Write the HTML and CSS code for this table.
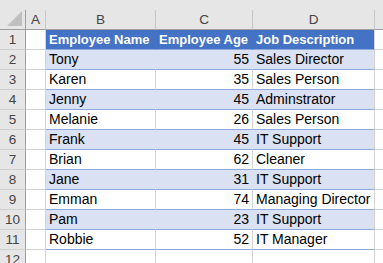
FILE: index.html
```html
<!DOCTYPE html>
<html>
<head>
<meta charset="utf-8">
<link rel="stylesheet" href="styles.css">
</head>
<body>
<div class="sheet">
  <div class="topstrip"></div>
  <table class="grid">
    <colgroup>
      <col class="c-rh"><col class="c-a"><col class="c-b"><col class="c-c"><col class="c-d"><col class="c-e">
    </colgroup>
    <thead>
      <tr class="colhead">
        <th class="corner"><span class="tri"></span></th>
        <th>A</th><th>B</th><th>C</th><th>D</th><th class="last"></th>
      </tr>
    </thead>
    <tbody>
      <tr class="hdr"><th>1</th><td></td><td class="t">Employee Name</td><td class="t">Employee Age</td><td class="t end">Job Description</td><td></td></tr>
      <tr class="band"><th>2</th><td></td><td class="t">Tony</td><td class="t num">55</td><td class="t end">Sales Director</td><td></td></tr>
      <tr class="plain"><th>3</th><td></td><td class="t">Karen</td><td class="t num">35</td><td class="t end">Sales Person</td><td></td></tr>
      <tr class="band"><th>4</th><td></td><td class="t">Jenny</td><td class="t num">45</td><td class="t end">Adminstrator</td><td></td></tr>
      <tr class="plain"><th>5</th><td></td><td class="t">Melanie</td><td class="t num">26</td><td class="t end">Sales Person</td><td></td></tr>
      <tr class="band"><th>6</th><td></td><td class="t">Frank</td><td class="t num">45</td><td class="t end">IT Support</td><td></td></tr>
      <tr class="plain"><th>7</th><td></td><td class="t">Brian</td><td class="t num">62</td><td class="t end">Cleaner</td><td></td></tr>
      <tr class="band"><th>8</th><td></td><td class="t">Jane</td><td class="t num">31</td><td class="t end">IT Support</td><td></td></tr>
      <tr class="plain"><th>9</th><td></td><td class="t">Emman</td><td class="t num">74</td><td class="t end">Managing Director</td><td></td></tr>
      <tr class="band"><th>10</th><td></td><td class="t">Pam</td><td class="t num">23</td><td class="t end">IT Support</td><td></td></tr>
      <tr class="plain"><th>11</th><td></td><td class="t">Robbie</td><td class="t num">52</td><td class="t end">IT Manager</td><td></td></tr>
      <tr class="empty"><th>12</th><td></td><td></td><td></td><td></td><td></td></tr>
    </tbody>
  </table>
</div>
</body>
</html>
```
FILE: styles.css
```css
html, body {
  margin: 0;
  padding: 0;
  background: #ffffff;
  overflow: hidden;
}
.sheet {
  width: 383px;
  height: 263px;
  overflow: hidden;
  font-family: "Liberation Sans", Arial, sans-serif;
  font-size: 14px;
  color: #000;
}
.topstrip {
  height: 10px;
  background: #e6e6e6;
}
.grid {
  border-collapse: separate;
  border-spacing: 0;
  table-layout: fixed;
  width: 390px;
}
.c-rh { width: 26px; }
.c-a { width: 20px; }
.c-b { width: 110px; }
.c-c { width: 97px; }
.c-d { width: 122px; }
.c-e { width: 15px; }

.grid th, .grid td {
  padding: 0;
  box-sizing: border-box;
  white-space: nowrap;
  overflow: visible;
}
.grid tbody tr { height: 20px; }
.grid tbody td {
  height: 20px;
  border-right: 1px solid #d4d4d4;
  border-bottom: 1px solid #d4d4d4;
  line-height: 19px;
}
.colhead th {
  height: 20px;
  background: #e6e6e6;
  border-right: 1px solid #c8c8c8;
  border-bottom: 1px solid #9f9f9f;
  font-weight: normal;
  color: #444;
  font-size: 13.5px;
  text-align: center;
  vertical-align: middle;
  line-height: 19px;
}
.colhead th.last { border-right: none; }
.colhead th.corner {
  position: relative;
  border-right: 1px solid #9f9f9f;
}
.tri {
  position: absolute;
  right: 3px;
  bottom: 3px;
  width: 0;
  height: 0;
  border-left: 15px solid transparent;
  border-bottom: 15px solid #c0c0c0;
}
.grid tbody th {
  background: #e6e6e6;
  color: #444;
  font-weight: normal;
  font-size: 13.5px;
  text-align: center;
  border-right: 1px solid #9f9f9f;
  border-bottom: 1px solid #d0d0d0;
  line-height: 19px;
}
.grid td.t { padding-left: 3px; padding-right: 3px; }
.grid td.num { text-align: right; }

.hdr .t {
  background: #4472c4;
  color: #ffffff;
  font-weight: bold;
  font-size: 13px;
  border-right-color: #4472c4;
  border-bottom-color: #8ea9db;
}
.band .t {
  background: #d9e1f2;
  border-right-color: #d9e1f2;
  border-bottom-color: #8ea9db;
}
.plain .t {
  border-bottom-color: #8ea9db;
}
.grid tbody td.t.end { border-right-color: #d4d4d4; }
```
